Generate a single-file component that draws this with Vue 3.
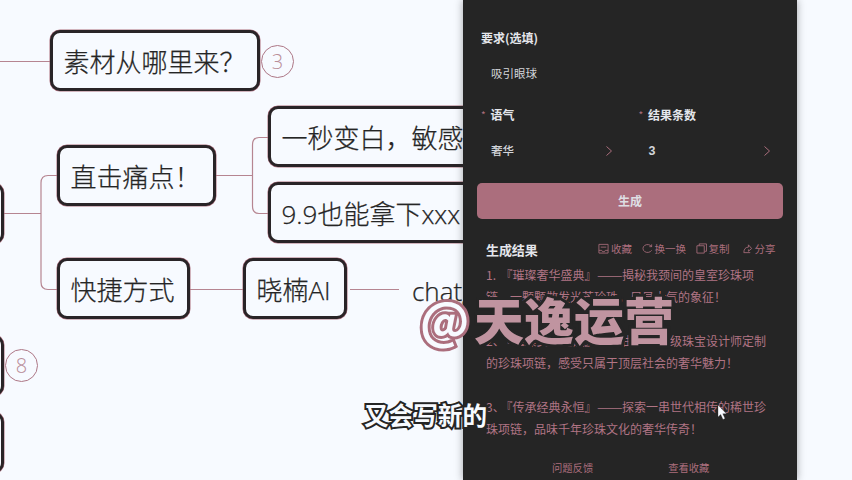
<script setup>
const nodes = [
  { id: 'source', text: '素材从哪里来？' },
  { id: 'pain', text: '直击痛点！' },
  { id: 'white', text: '一秒变白，敏感肌' },
  { id: 'price', text: '9.9也能拿下xxx' },
  { id: 'quick', text: '快捷方式' },
  { id: 'xiaonan', text: '晓楠AI' },
  { id: 'edge-a', text: '' },
  { id: 'edge-b', text: '' },
  { id: 'edge-c', text: '' }
]
const fields = [
  { label: '语气', value: '奢华' },
  { label: '结果条数', value: '3' }
]
const results = [
  { n: '1.', title: '『璀璨奢华盛典』', text: '揭秘我颈间的皇室珍珠项', rest: '链，一颗颗散发光芒珍珠，尽显大气的象征！' },
  { n: '2、', title: '『璀璨女王之选』', text: '由国际顶级珠宝设计师定制', rest: '的珍珠项链，感受只属于顶层社会的奢华魅力！' },
  { n: '3、', title: '『传承经典永恒』', text: '探索一串世代相传的稀世珍', rest: '珠项链，品味千年珍珠文化的奢华传奇！' }
]
</script>

<template>
  <main class="screen">
    <section class="map">
      <svg class="links" viewBox="0 0 470 480">
        <path d="M0 61.5H51M4 213.5H41M58 175.5H48Q41 175.5 41 183V282Q41 289.5 48 289.5H58M216 175.5H252M269 137.5H259Q252.500 137.500 252.500 145V206Q252.500 213.500 259 213.500H269M190 289.500H243M350 289.500H399" />
      </svg>
      <div v-for="n in nodes" :key="n.id" class="node" :class="n.id">{{ n.text }}</div>
      <span class="count three">3</span>
      <span class="count eight">8</span>
      <span class="chat">chatgpt</span>
    </section>

    <aside class="panel">
      <h2 class="label">要求(选填)</h2>
      <p class="input">吸引眼球</p>
      <div class="fields">
        <div v-for="f in fields" :key="f.label" class="field">
          <h2 class="label"><i>*</i>{{ f.label }}</h2>
          <div class="select">
            <span>{{ f.value }}</span>
            <svg viewBox="0 0 6 10"><path d="M.5.5 5.500 5 .5 9.500" /></svg>
          </div>
        </div>
      </div>
      <button class="generate">生成</button>
      <header class="bar">
        <h3>生成结果</h3>
        <span class="action save"><svg viewBox="0 0 12 12"><path d="M1 1.500h10v9.500H1zM3 4.500h6M1 8h3l1 1.500h2L8 8h3" /></svg>收藏</span>
        <span class="action swap"><svg viewBox="0 0 12 12"><path d="M10.500 4A5 4.300 0 1 0 10.500 8M10.500 1.500V4H8" /></svg>换一换</span>
        <span class="action copy"><svg viewBox="0 0 12 12"><path d="M3.500 3V1h8v8h-2M1 3h8v8H1z" /></svg>复制</span>
        <span class="action share"><svg viewBox="0 0 12 12"><path d="M2 10.500C2 6.500 4 4.500 7 4.500V2l3.500 4L7 9V7M2 10.500h7" /></svg>分享</span>
      </header>
      <article class="results">
        <div v-for="r in results" :key="r.n" class="result">
          <p><span class="num">{{ r.n }}</span>{{ r.title }}<span class="dash">——</span>{{ r.text }}</p>
          <p>{{ r.rest }}</p>
        </div>
      </article>
      <footer class="links-row"><span>问题反馈</span><span>查看收藏</span></footer>
    </aside>

    <div class="watermark"><span class="at">@</span><span class="name">天逸运营</span></div>
    <div class="caption">又会写新的</div>
    <svg class="cursor" viewBox="0 0 10 15"><path d="M1 0v12l2.700-2.600L6 14.500l2-1-2.200-4.700H9.500z" /></svg>
  </main>
</template>

<style>
body { overflow: hidden; background: #f7faff; }
</style>

<style scoped>
* { box-sizing: border-box; }
.screen { position: relative; width: 852px; height: 480px; overflow: hidden; background: #f7faff; color: #252525; font-family: "Noto Sans CJK SC", sans-serif; }
h2, h3, p { margin: 0; }
.map { position: absolute; inset: 0; font-family: "Open Sans", "Noto Sans CJK SC", sans-serif; }
.links { position: absolute; left: 0; top: 0; width: 470px; height: 480px; fill: none; stroke: #b68591; stroke-width: 1.2; }
.node { position: absolute; height: 61px; padding-left: 10.500px; border: 3px solid #292427; border-radius: 10px; background: #f7faff; box-shadow: 0 0 0 .5px #ab6e7d; font-size: 26px; font-weight: 300; line-height: 58px; white-space: nowrap; overflow: hidden; -webkit-text-stroke: .25px #252525; }
.source { left: 50px; top: 30px; width: 210px; }
.pain { left: 57px; top: 145px; width: 159px; }
.white { left: 268px; top: 106px; width: 250px; }
.price { left: 268px; top: 182px; width: 250px; }
.quick { left: 57px; top: 258px; width: 133px; }
.xiaonan { left: 243px; top: 258px; width: 104px; }
.edge-a, .edge-b, .edge-c { left: -46px; width: 50px; }
.edge-a { top: 183px; }
.edge-b { top: 335px; }
.edge-c { top: 412px; }
.chat { position: absolute; left: 412px; top: 271px; font-size: 26px; font-weight: 300; line-height: 40px; -webkit-text-stroke: .25px #252525; }
.count { position: absolute; width: 33px; height: 33px; border: 1px solid #ad7786; border-radius: 50%; text-align: center; line-height: 31px; font-size: 20px; font-weight: 300; color: #b98e99; }
.three { left: 261px; top: 45px; }
.eight { left: 5px; top: 349px; }

.panel { position: absolute; left: 463px; top: 0; width: 334px; height: 480px; padding: 28px 14px 0; background: #252525; box-shadow: 0 0 8px rgba(37, 37, 37, .4); color: #d3d5da; font-size: 12px; display: flex; flex-direction: column; }
.label { font-size: 12px; line-height: 20px; font-weight: 700; color: #e4e6eb; padding-left: 4px; }
.input { margin: 15px 0 0 14px; font-size: 11.500px; line-height: 20px; }
.fields { display: grid; grid-template-columns: 157.500px 1fr; margin-top: 22px; }
.field .label { display: flex; }
.field i { width: 9.500px; font-size: 10px; font-style: normal; font-weight: 400; color: #ab6e7d; }
.select { display: flex; align-items: center; height: 20px; margin-top: 16px; padding-left: 14px; font-family: "Liberation Sans", "Noto Sans CJK SC", sans-serif; font-size: 11.500px; font-weight: 500; }
.select span { width: 115px; line-height: 18px; }
.field:last-child .select span { font-size: 12.500px; font-weight: 700; }
.select svg { width: 6px; height: 10px; fill: none; stroke: #ab6e7d; stroke-width: 1; }
.generate { flex: none; width: 306px; height: 36px; margin: 22px 0 0; padding: 0 0 2px; border: 0; border-radius: 5px; background: #ab6e7d; color: #dedfe4; font: 700 12px "Noto Sans CJK SC", sans-serif; }
.bar { display: flex; align-items: center; height: 20px; margin-top: 21px; padding-left: 9px; }
.bar h3 { width: 112px; font-size: 13px; line-height: 20px; letter-spacing: -.1px; color: #e4e6eb; }
.action { display: flex; align-items: center; gap: 2px; padding-bottom: 4px; color: #ab6e7d; font-size: 10.500px; white-space: nowrap; }
.action svg { width: 11px; height: 11px; fill: none; stroke: #ab6e7d; stroke-width: .9; }
.save { width: 43.500px; }
.swap { width: 54px; }
.copy { width: 46px; }
.results { display: flex; flex-direction: column; gap: 22px; margin-top: 4px; padding-left: 9px; color: #b07484; font-size: 12px; line-height: 22px; white-space: nowrap; }
.num { display: inline-block; width: 14.500px; }
.dash { display: inline-block; width: 25.500px; height: 22px; vertical-align: top; transform: scaleX(1.27); transform-origin: left center; }
.results p { height: 22px; }
.links-row { display: flex; gap: 75px; margin-top: 18px; padding-left: 75px; font-size: 10.300px; line-height: 20px; color: #ab6e7d; }

.watermark { position: absolute; left: 420px; top: 283px; display: flex; align-items: center; height: 70px; font-size: 50px; font-weight: 900; line-height: 70px; white-space: nowrap; }
.at { width: 54px; color: #f7faff; font-size: 49px; font-weight: 700; -webkit-text-stroke: 6px #ab6e7d; paint-order: stroke fill; }
.name { color: #c094a0; -webkit-text-stroke: 6px #252525; paint-order: stroke fill; }
.caption { position: absolute; left: 364px; top: 396px; color: #f7faff; font-size: 24.600px; font-weight: 700; line-height: 36px; white-space: nowrap; -webkit-text-stroke: 4px #252525; paint-order: stroke fill; }
.cursor { position: absolute; left: 717px; top: 405px; width: 10px; height: 15px; fill: #f7faff; stroke: #252525; stroke-width: .3; }
</style>
